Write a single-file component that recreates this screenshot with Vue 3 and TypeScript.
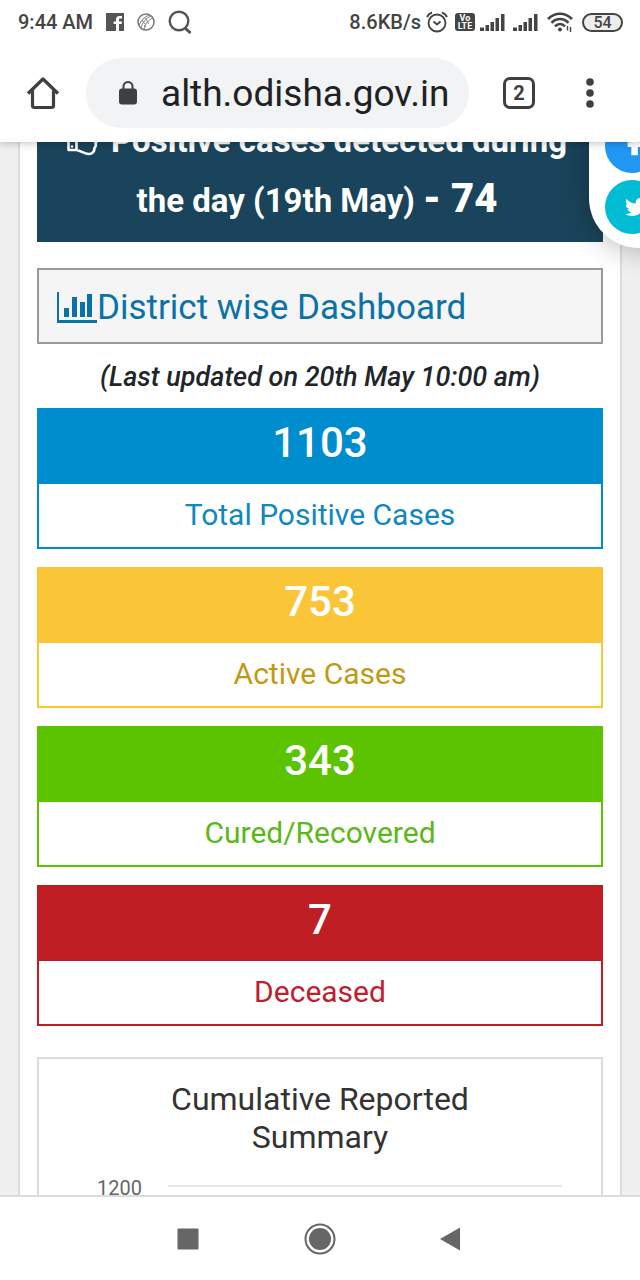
<script setup lang="ts">
interface Stat {
  value: number
  label: string
  tone: string
}

const stats: Stat[] = [
  { value: 1103, label: 'Total Positive Cases', tone: 'blue' },
  { value: 753, label: 'Active Cases', tone: 'yellow' },
  { value: 343, label: 'Cured/Recovered', tone: 'green' },
  { value: 7, label: 'Deceased', tone: 'red' },
]
</script>

<template>
  <div class="phone">
    <header class="chrome">
      <div class="status">
        <div class="status-left">
          <span>9:44 AM</span>
          <svg class="fb" width="18" height="18" viewBox="0 0 18 18">
            <path fill="#555" d="M0 0h18v18h-5v-7h2.600l.4-2.600h-3V6.800c0-.9.4-1.300 1.300-1.300H16V3h-2.400C11 3 10 4.500 10 6.500v1.900H7.600V11H10v7H0z" />
          </svg>
          <svg class="ball" width="18" height="18" viewBox="0 0 18 18" fill="none" stroke="#777">
            <circle cx="9" cy="9" r="8" stroke-width="1.500" />
            <path d="M2 12C4 8 7 4 12 2M4 15C5 10 9 5 14 3M7 16C8 11 11 7 16 5" stroke-width="1" />
            <path d="M5 7l3 4M8 5l3 4M7 12l2 2M10 8l2 3" stroke-width=".8" />
          </svg>
          <svg width="24" height="24" viewBox="0 0 24 24" fill="none" stroke="#555">
            <circle cx="11" cy="11" r="9.300" stroke-width="2.400" />
            <path d="M16.500 17.500l6 5.500" stroke-width="3" />
          </svg>
        </div>
        <div class="status-right">
          <span>8.6KB/s</span>
          <svg class="alarm" width="22" height="22" viewBox="0 0 22 22" fill="none" stroke="#444">
            <circle cx="11" cy="12" r="8.500" stroke-width="1.800" />
            <path d="M1 6C2 3.800 3.800 2.300 6 1.500M21 6C20 3.800 18.200 2.300 16 1.500" stroke-width="2" />
            <path d="M7.500 10.500l3.500 3 3.500-3" stroke-width="1.800" />
          </svg>
          <span class="volte"><b>Vo</b><b>LTE</b></span>
          <svg class="bars" width="25" height="18" viewBox="0 0 25 18" fill="#444">
            <path d="M0 14.500h4V18H0zM5.500 12h3.500v6H5.500zM10.500 9h3.500v9h-3.500zM15.500 5h3.500v13h-3.500zM21 1h3.500v17H21z" />
          </svg>
          <svg class="bars second" width="25" height="18" viewBox="0 0 25 18" fill="#444">
            <path d="M0 14.500h4V18H0zM5.500 12h3.500v6H5.500zM10.500 9h3.500v9h-3.500zM15.500 5h3.500v13h-3.500zM21 1h3.500v17H21z" />
          </svg>
          <svg class="wifi" width="26" height="20" viewBox="0 0 26 20" fill="none" stroke="#444" stroke-width="2.600">
            <path d="M1 7C8 0 18 0 25 7M4.500 10.800c5-5 12-5 17 0M8 14.300c3-3 7-3 10 0" />
            <circle cx="13" cy="17.500" r="2" fill="#444" stroke="none" />
            <path d="M20.500 14v4.500M23.500 15v5" stroke-width="1.400" />
          </svg>
          <span class="battery">54</span>
        </div>
      </div>
      <div class="toolbar">
        <button class="icon-button home" aria-label="Home">
          <svg width="34" height="34" viewBox="0 0 34 34" fill="none" stroke="#3c4043" stroke-width="3.200" stroke-linejoin="round">
            <path d="M2 17.500L17 3l15 14.500M6.500 14.500v15a2 2 0 0 0 2 2h17a2 2 0 0 0 2-2v-15" />
          </svg>
        </button>
        <button class="address">
          <svg width="20" height="24" viewBox="0 0 20 24">
            <rect x="1" y="7.500" width="18" height="16" rx="3" fill="#3c4043" />
            <path d="M5.500 8V5.500a4.500 4.500 0 0 1 9 0V8" fill="none" stroke="#3c4043" stroke-width="2" />
          </svg>
          <span>alth.odisha.gov.in</span>
        </button>
        <button class="tabs" aria-label="Open tabs">2</button>
        <button class="icon-button more" aria-label="More options">
          <svg width="8" height="30" viewBox="0 0 8 30" fill="#3c4043">
            <circle cx="4" cy="4" r="3.800" />
            <circle cx="4" cy="15" r="3.800" />
            <circle cx="4" cy="26" r="3.800" />
          </svg>
        </button>
      </div>
    </header>

    <main class="viewport">
      <div class="page">
        <section class="banner">
          <svg class="thumb" width="32" height="34" viewBox="0 0 32 34" fill="none" stroke="#fff" stroke-width="2.600" stroke-linejoin="round">
            <path d="M1.500 13h8v15h-8zM9.500 14l6-6 1-6c4-1 5 3 3 9h7c4 0 4 4 2 5 2 2 1 5 0 5 1 3-1 5-1 5 0 4-2 6-6 6-4 0-7-3-12-4" />
            <circle cx="5" cy="24.500" r="1.200" fill="#fff" stroke="none" />
          </svg>
          Positive cases detected during the day (19th May) <strong>- 74</strong>
        </section>

        <a class="dashboard" href="#dashboard">
          <svg width="40" height="31" viewBox="0 0 40 31" fill="#0b72a8">
            <path d="M0 0h2v28h38v3H0zM7 16h5v9H7zM15 5h5v20h-5zM23 10h5v15h-5zM30 2h5v23h-5z" />
          </svg>
          <span>District wise Dashboard</span>
        </a>

        <p class="updated">(Last updated on 20th May 10:00 am)</p>

        <section class="stats">
          <article v-for="stat in stats" :key="stat.label" class="stat" :class="stat.tone">
            <div class="value">{{ stat.value }}</div>
            <div class="label">{{ stat.label }}</div>
          </article>
        </section>

        <section class="chart">
          <h2>Cumulative Reported Summary</h2>
          <div class="axis">
            <span>1200</span>
            <i class="gridline"></i>
          </div>
        </section>
      </div>

      <aside class="share">
        <a href="#facebook" class="round facebook" aria-label="Facebook">
          <svg width="28" height="28" viewBox="0 0 30 30" fill="#fff">
            <path d="M10 25V16H6v-5h4V8.500c0-4 2.500-6 6-6h6V7h-3c-1.500 0-2 .8-2 2v2h5l-.8 5H17v9z" />
          </svg>
        </a>
        <a href="#twitter" class="round twitter" aria-label="Twitter">
          <svg width="22" height="22" viewBox="0 0 24 24" fill="#fff">
            <path d="M23.950 4.570a10 10 0 0 1-2.820.77 4.960 4.960 0 0 0 2.160-2.720c-.95.550-2 .95-3.130 1.180a4.920 4.920 0 0 0-8.380 4.480C7.690 8.090 4.070 6.130 1.640 3.160a4.820 4.820 0 0 0-.67 2.480c0 1.710.87 3.210 2.190 4.100a4.900 4.900 0 0 1-2.230-.62v.06a4.920 4.920 0 0 0 3.950 4.830 5 5 0 0 1-2.210.08 4.940 4.940 0 0 0 4.600 3.420A9.870 9.870 0 0 1 0 19.540a13.990 13.990 0 0 0 7.550 2.210c9.050 0 14-7.500 14-13.980 0-.21 0-.42-.02-.63a9.940 9.940 0 0 0 2.420-2.570z" />
          </svg>
        </a>
      </aside>
    </main>

    <nav class="system">
      <button aria-label="Recent apps">
        <svg width="32" height="32" viewBox="0 0 32 32"><rect x="5.500" y="5.500" width="21" height="21" rx="1" fill="#666" /></svg>
      </button>
      <button aria-label="Home screen">
        <svg width="32" height="32" viewBox="0 0 32 32">
          <circle cx="16" cy="16" r="14.500" fill="none" stroke="#666" stroke-width="2" />
          <circle cx="16" cy="16" r="11" fill="#666" />
        </svg>
      </button>
      <button aria-label="Back">
        <svg width="32" height="32" viewBox="0 0 32 32"><path d="M4 16L24 4.500v23z" fill="#666" /></svg>
      </button>
    </nav>
  </div>
</template>

<style>
body {
  background: #fff;
}
</style>

<style scoped>
.phone {
  display: flex;
  flex-direction: column;
  height: 100vh;
  overflow: hidden;
  background: #fff;
  font-family: Roboto, "Liberation Sans", sans-serif;
  color: #212529;
}

button {
  display: flex;
  align-items: center;
  justify-content: center;
  padding: 0;
  border: 0;
  background: none;
  font-family: inherit;
  color: inherit;
}

svg {
  flex: none;
}

.chrome {
  position: relative;
  z-index: 2;
  flex: none;
  background: #fff;
  box-shadow: 0 1px 8px rgba(0, 0, 0, 0.25);
}

.status {
  display: flex;
  align-items: center;
  justify-content: space-between;
  height: 44px;
  padding: 0 17px 0 18px;
  font-size: 20px;
  font-weight: 500;
  color: #444;
}

.status-left,
.status-right {
  display: flex;
  align-items: center;
}

.status-left {
  gap: 13px;
}

.status-right {
  gap: 5px;
}

.volte {
  display: flex;
  flex-direction: column;
  align-items: center;
  justify-content: center;
  width: 20px;
  height: 18px;
  margin-left: 2px;
  border-radius: 3px;
  background: #444;
  color: #fff;
  font-size: 9px;
  line-height: 8px;
}

.second {
  margin-left: 3px;
}

.wifi {
  margin: 0 4px;
}

.battery {
  box-sizing: border-box;
  width: 41px;
  height: 19px;
  border: 2px solid #444;
  border-radius: 10px;
  background: #eee;
  font-size: 16px;
  line-height: 15px;
  text-align: center;
}

.toolbar {
  display: flex;
  align-items: center;
  height: 98px;
  padding: 0 46px 0 26px;
}

.address {
  flex: 1;
  justify-content: flex-start;
  gap: 23px;
  height: 70px;
  margin: 0 34px 0 26px;
  padding: 0 16px 0 32px;
  border-radius: 35px;
  background: #f1f3f4;
  color: #202124;
  font-size: 37px;
  white-space: nowrap;
}

.tabs {
  width: 32px;
  height: 32px;
  margin-right: 51px;
  border: 3px solid #3c4043;
  border-radius: 7px;
  color: #3c4043;
  font-size: 20px;
  font-weight: 700;
}

.viewport {
  position: relative;
  flex: 1;
  min-height: 0;
  overflow: hidden;
  background: #f0f0f0;
}

.page {
  margin: -44px 18px 0;
  padding: 0 17px;
  border: solid #dcdcdc;
  border-width: 0 2px;
  background: #fff;
}

.banner {
  padding: 13px 22px 11px 16px;
  background: #1a445b;
  color: #fff;
  font-size: 33px;
  font-weight: 700;
  line-height: 60px;
  text-align: center;
}

.banner strong {
  font-size: 40px;
  line-height: 40px;
}

.thumb {
  margin-right: 4px;
  vertical-align: -4px;
}

.dashboard {
  display: flex;
  align-items: center;
  height: 70px;
  margin-top: 26px;
  padding: 2px 18px 0;
  border: 2px solid #999;
  background: #f5f5f5;
  color: #0b72a8;
  font-size: 35px;
  text-decoration: none;
}

.updated {
  margin: 17px 0 15px;
  font-size: 27px;
  font-style: italic;
  font-weight: 500;
  line-height: 32px;
  text-align: center;
}

.stats {
  display: grid;
  gap: 18px;
}

.stat {
  border: 2px solid var(--tone);
  color: var(--text);
  text-align: center;
}

.value {
  padding: 8px 0 16px;
  background: var(--tone);
  color: #fff;
  font-size: 42px;
  font-weight: 500;
  line-height: 50px;
}

.label {
  padding: 11px 0 12px;
  font-size: 30px;
  line-height: 40px;
}

.blue {
  --tone: #008dcd;
  --text: #0f88bd;
}

.yellow {
  --tone: #fac637;
  --text: #c19a14;
}

.green {
  --tone: #5cc300;
  --text: #5cb81a;
}

.red {
  --tone: #be1e24;
  --text: #be1e2d;
}

.chart {
  margin-top: 31px;
  border: 2px solid #dcdcdc;
}

.chart h2 {
  max-width: 400px;
  margin: 21px auto 0;
  color: #333;
  font-size: 32px;
  font-weight: 400;
  line-height: 38px;
  text-align: center;
}

.axis {
  display: flex;
  align-items: center;
  gap: 26px;
  margin-top: 20px;
  padding: 0 39px 200px 58px;
  color: #666;
  font-size: 20px;
  line-height: 24px;
}

.gridline {
  flex: 1;
  height: 2px;
  margin-bottom: 5px;
  background: #e6e6e6;
}

.share {
  position: absolute;
  top: -60px;
  right: -35px;
  display: flex;
  flex-direction: column;
  justify-content: flex-end;
  gap: 7px;
  box-sizing: border-box;
  width: 86px;
  height: 166px;
  padding: 0 16px 14px;
  border-radius: 0 0 0 50px;
  background: #fff;
  box-shadow: 0 0 30px rgba(0, 0, 0, 0.3);
}

.round {
  display: flex;
  align-items: center;
  justify-content: center;
  box-sizing: border-box;
  height: 54px;
  padding-left: 8px;
  border-radius: 50%;
}

.facebook {
  background: #2196f3;
}

.twitter {
  background: #00bcd4;
}

.system {
  display: flex;
  flex: none;
  align-items: center;
  justify-content: center;
  gap: 100px;
  height: 83px;
  border-top: 2px solid #dcdcdc;
  background: #fff;
}
</style>
